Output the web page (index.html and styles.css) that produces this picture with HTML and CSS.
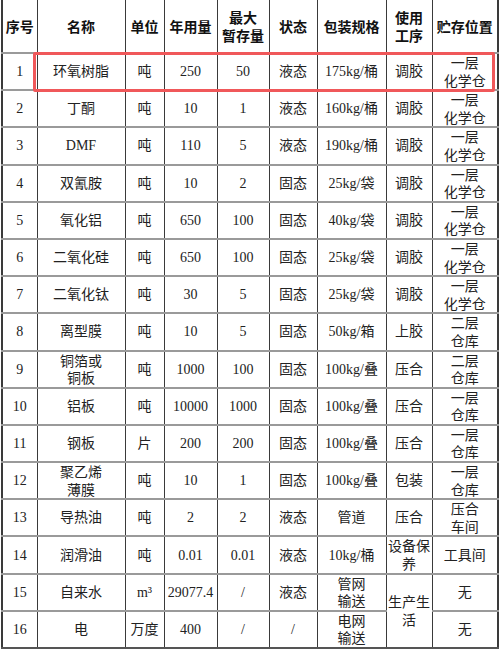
FILE: index.html
```html
<!DOCTYPE html>
<html lang="zh">
<head>
<meta charset="utf-8">
<link rel="stylesheet" href="styles.css">
</head>
<body>
<div class="wrap">
<table class="grid">
<colgroup>
<col class="c1"><col class="c2"><col class="c3"><col class="c4"><col class="c5"><col class="c6"><col class="c7"><col class="c8"><col class="c9">
</colgroup>
<thead>
<tr class="head">
<th>序号</th><th>名称</th><th>单位</th><th>年用量</th><th>最大<br>暂存量</th><th>状态</th><th>包装规格</th><th>使用<br>工序</th><th>贮存位置</th>
</tr>
</thead>
<tbody>
<tr><td>1</td><td>环氧树脂</td><td>吨</td><td>250</td><td>50</td><td>液态</td><td>175kg/桶</td><td>调胶</td><td class="two">一层<br>化学仓</td></tr>
<tr><td>2</td><td>丁酮</td><td>吨</td><td>10</td><td>1</td><td>液态</td><td>160kg/桶</td><td>调胶</td><td class="two">一层<br>化学仓</td></tr>
<tr><td>3</td><td>DMF</td><td>吨</td><td>110</td><td>5</td><td>液态</td><td>190kg/桶</td><td>调胶</td><td class="two">一层<br>化学仓</td></tr>
<tr><td>4</td><td>双氰胺</td><td>吨</td><td>10</td><td>2</td><td>固态</td><td>25kg/袋</td><td>调胶</td><td class="two">一层<br>化学仓</td></tr>
<tr><td>5</td><td>氧化铝</td><td>吨</td><td>650</td><td>100</td><td>固态</td><td>40kg/袋</td><td>调胶</td><td class="two">一层<br>化学仓</td></tr>
<tr><td>6</td><td>二氧化硅</td><td>吨</td><td>650</td><td>100</td><td>固态</td><td>25kg/袋</td><td>调胶</td><td class="two">一层<br>化学仓</td></tr>
<tr><td>7</td><td>二氧化钛</td><td>吨</td><td>30</td><td>5</td><td>固态</td><td>25kg/袋</td><td>调胶</td><td class="two">一层<br>化学仓</td></tr>
<tr><td>8</td><td>离型膜</td><td>吨</td><td>10</td><td>5</td><td>固态</td><td>50kg/箱</td><td>上胶</td><td class="two">二层<br>仓库</td></tr>
<tr><td>9</td><td class="two">铜箔或<br>铜板</td><td>吨</td><td>1000</td><td>100</td><td>固态</td><td>100kg/叠</td><td>压合</td><td class="two">二层<br>仓库</td></tr>
<tr><td>10</td><td>铝板</td><td>吨</td><td>10000</td><td>1000</td><td>固态</td><td>100kg/叠</td><td>压合</td><td class="two">一层<br>仓库</td></tr>
<tr><td>11</td><td>钢板</td><td>片</td><td>200</td><td>200</td><td>固态</td><td>100kg/叠</td><td>压合</td><td class="two">一层<br>仓库</td></tr>
<tr><td>12</td><td class="two">聚乙烯<br>薄膜</td><td>吨</td><td>10</td><td>1</td><td>固态</td><td>100kg/叠</td><td>包装</td><td class="two">一层<br>仓库</td></tr>
<tr><td>13</td><td>导热油</td><td>吨</td><td>2</td><td>2</td><td>液态</td><td>管道</td><td>压合</td><td class="two">压合<br>车间</td></tr>
<tr><td>14</td><td>润滑油</td><td>吨</td><td>0.01</td><td>0.01</td><td>液态</td><td>10kg/桶</td><td class="two">设备保<br>养</td><td>工具间</td></tr>
<tr><td>15</td><td>自来水</td><td>m³</td><td>29077.4</td><td>/</td><td>液态</td><td class="two">管网<br>输送</td><td class="two" rowspan="2">生产生<br>活</td><td>无</td></tr>
<tr class="last"><td>16</td><td>电</td><td>万度</td><td>400</td><td>/</td><td>/</td><td class="two">电网<br>输送</td><td>无</td></tr>
</tbody>
</table>
<div class="highlight"></div>
</div>
</body>
</html>
```

FILE: styles.css
```css
html, body {
  margin: 0;
  padding: 0;
  background: #ffffff;
}
.wrap {
  position: relative;
  padding-left: 1px;
  width: 498px;
}
.grid {
  border-collapse: collapse;
  table-layout: fixed;
  width: 496px;
  font-family: "Liberation Serif", "Noto Sans CJK SC", serif;
  font-size: 14px;
  color: #222;
  text-align: center;
}
.c1 { width: 35px; }
.c2 { width: 88px; }
.c3 { width: 39px; }
.c4 { width: 53px; }
.c5 { width: 52px; }
.c6 { width: 48px; }
.c7 { width: 69px; }
.c8 { width: 46px; }
.c9 { width: 66px; }
.grid th,
.grid td {
  padding: 0 1px;
  vertical-align: middle;
  border-left: 1px solid #3a3a3a;
  border-right: 1px solid #3a3a3a;
  border-top: 2px solid #9a9a9a;
  border-bottom: 2px solid #9a9a9a;
  line-height: 17px;
  white-space: nowrap;
  overflow: hidden;
}
.grid th {
  font-family: "Noto Sans CJK SC", sans-serif;
  font-weight: 700;
  color: #111;
  height: 52px;
  line-height: 18px;
  border-top: none;
}
.grid td {
  height: 35.2px;
}
.grid td.two {
  font-family: "Noto Sans CJK SC", sans-serif;
  line-height: 17.6px;
}
.grid tr > :first-child {
  border-left: 2px solid #3a3a3a;
}
.grid tr > :last-child {
  border-right: 2px solid #3a3a3a;
}
.grid .last td,
.grid td[rowspan] {
  border-bottom: 2px solid #555;
}
.highlight {
  position: absolute;
  left: 33px;
  top: 52px;
  width: 462px;
  height: 40px;
  box-sizing: border-box;
  border: 3px solid #f0585a;
  border-radius: 2px;
}
```
